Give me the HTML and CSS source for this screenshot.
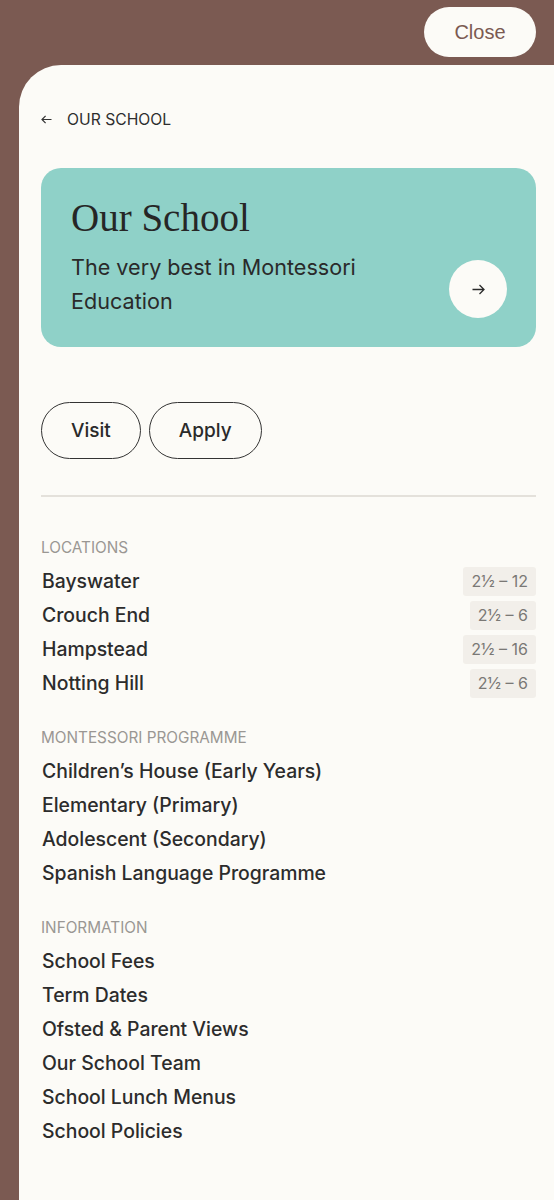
FILE: index.html
```html
<!DOCTYPE html>
<html lang="en">
<head>
<meta charset="utf-8">
<title>Our School</title>
<link rel="stylesheet" href="styles.css">
</head>
<body>
<header class="topbar">
  <button class="close-btn">Close</button>
</header>
<main class="panel">
  <a class="back" href="#">
    <svg class="back-icon" width="11" height="9" viewBox="0 0 11 9" fill="none" stroke="#333" stroke-width="1.2"><path d="M10.5 4.5H1M4.6 0.9L1 4.5l3.6 3.6"/></svg>
    <span>OUR SCHOOL</span>
  </a>
  <section class="hero">
    <h1 class="hero-title">Our School</h1>
    <div class="hero-row">
      <p class="hero-sub">The very best in Montessori Education</p>
      <a class="hero-go" href="#">
        <svg width="13" height="11" viewBox="0 0 13 11" fill="none" stroke="#2b2b2b" stroke-width="1.3"><path d="M0.5 5.5H12M7.5 1l4.5 4.5-4.5 4.5"/></svg>
      </a>
    </div>
  </section>
  <div class="actions">
    <a class="pill" href="#">Visit</a>
    <a class="pill" href="#">Apply</a>
  </div>
  <hr class="divider">
  <section class="group">
    <h2 class="group-label">LOCATIONS</h2>
    <ul class="list">
      <li class="row"><span>Bayswater</span><span class="badge">2½ – 12</span></li>
      <li class="row"><span>Crouch End</span><span class="badge">2½ – 6</span></li>
      <li class="row"><span>Hampstead</span><span class="badge">2½ – 16</span></li>
      <li class="row"><span>Notting Hill</span><span class="badge">2½ – 6</span></li>
    </ul>
  </section>
  <section class="group">
    <h2 class="group-label">MONTESSORI PROGRAMME</h2>
    <ul class="list">
      <li class="row"><span>Children’s House (Early Years)</span></li>
      <li class="row"><span>Elementary (Primary)</span></li>
      <li class="row"><span>Adolescent (Secondary)</span></li>
      <li class="row"><span>Spanish Language Programme</span></li>
    </ul>
  </section>
  <section class="group">
    <h2 class="group-label">INFORMATION</h2>
    <ul class="list">
      <li class="row"><span>School Fees</span></li>
      <li class="row"><span>Term Dates</span></li>
      <li class="row"><span>Ofsted &amp; Parent Views</span></li>
      <li class="row"><span>Our School Team</span></li>
      <li class="row"><span>School Lunch Menus</span></li>
      <li class="row"><span>School Policies</span></li>
    </ul>
  </section>
</main>
</body>
</html>
```
FILE: styles.css
```css
* { box-sizing: border-box; }
html, body { margin: 0; padding: 0; }
body {
  background: #7b5a52;
  font-family: Inter, "Noto Sans", sans-serif;
  color: #2c2c2c;
  min-height: 1200px;
  overflow: hidden;
}
.topbar {
  height: 65px;
  display: flex;
  justify-content: flex-end;
  align-items: flex-start;
  padding: 7px 18px 0 0;
}
.close-btn {
  height: 50px;
  width: 112px;
  border: none;
  border-radius: 25px;
  background: #fcfbf7;
  color: #7b5a52;
  font-family: "Liberation Sans", Arial, sans-serif;
  font-size: 20px;
  font-weight: 400;
  padding: 0;
}
.panel {
  margin-left: 19px;
  background: #fcfbf7;
  border-top-left-radius: 42px;
  padding: 44px 18px 60px 22px;
  min-height: 1135px;
}
.back {
  display: flex;
  align-items: center;
  gap: 15px;
  height: 20px;
  text-decoration: none;
  color: #2e2e2e;
  font-size: 15.7px;
  font-weight: 400;
}
.hero {
  margin-top: 39px;
  background: #8fd1c8;
  border-radius: 20px;
  padding: 28px 29px 29px 30px;
  height: 179px;
}
.hero-title {
  margin: 0;
  font-family: "Liberation Serif", "Times New Roman", serif;
  font-weight: 400;
  font-size: 39px;
  line-height: 44px;
  color: #262626;
}
.hero-row {
  margin-top: 10px;
  display: flex;
  justify-content: space-between;
  align-items: flex-end;
}
.hero-sub {
  margin: 0;
  max-width: 320px;
  font-size: 21.6px;
  line-height: 34px;
  color: #2a2a2a;
}
.hero-go {
  flex: none;
  width: 58px;
  height: 58px;
  border-radius: 50%;
  background: #fcfbf7;
  display: flex;
  align-items: center;
  justify-content: center;
}
.actions {
  margin-top: 55px;
  display: flex;
  gap: 8px;
}
.pill {
  height: 57px;
  display: flex;
  align-items: center;
  padding: 0 29px;
  border: 1.5px solid #333;
  border-radius: 29px;
  text-decoration: none;
  color: #2a2a2a;
  font-size: 19px;
  font-weight: 500;
}
.divider {
  margin: 36px 0 0;
  border: none;
  height: 2px;
  background: #e4e1db;
}
.group { margin-top: 28px; }
.divider + .group { margin-top: 41px; }
.group-label {
  margin: 0 0 6px;
  font-size: 15.3px;
  line-height: 20px;
  font-weight: 400;
  color: #9a9793;
}
.list { list-style: none; margin: 0; padding: 0; }
.row {
  height: 34px;
  display: flex;
  align-items: center;
  justify-content: space-between;
  padding-left: 1px;
  font-size: 19.4px;
  font-weight: 500;
  color: #2c2c2c;
}
.badge {
  height: 29px;
  display: flex;
  align-items: center;
  padding: 0 8px;
  background: #f2efea;
  border-radius: 3px;
  font-size: 16px;
  font-weight: 400;
  color: #7a7875;
}
```
